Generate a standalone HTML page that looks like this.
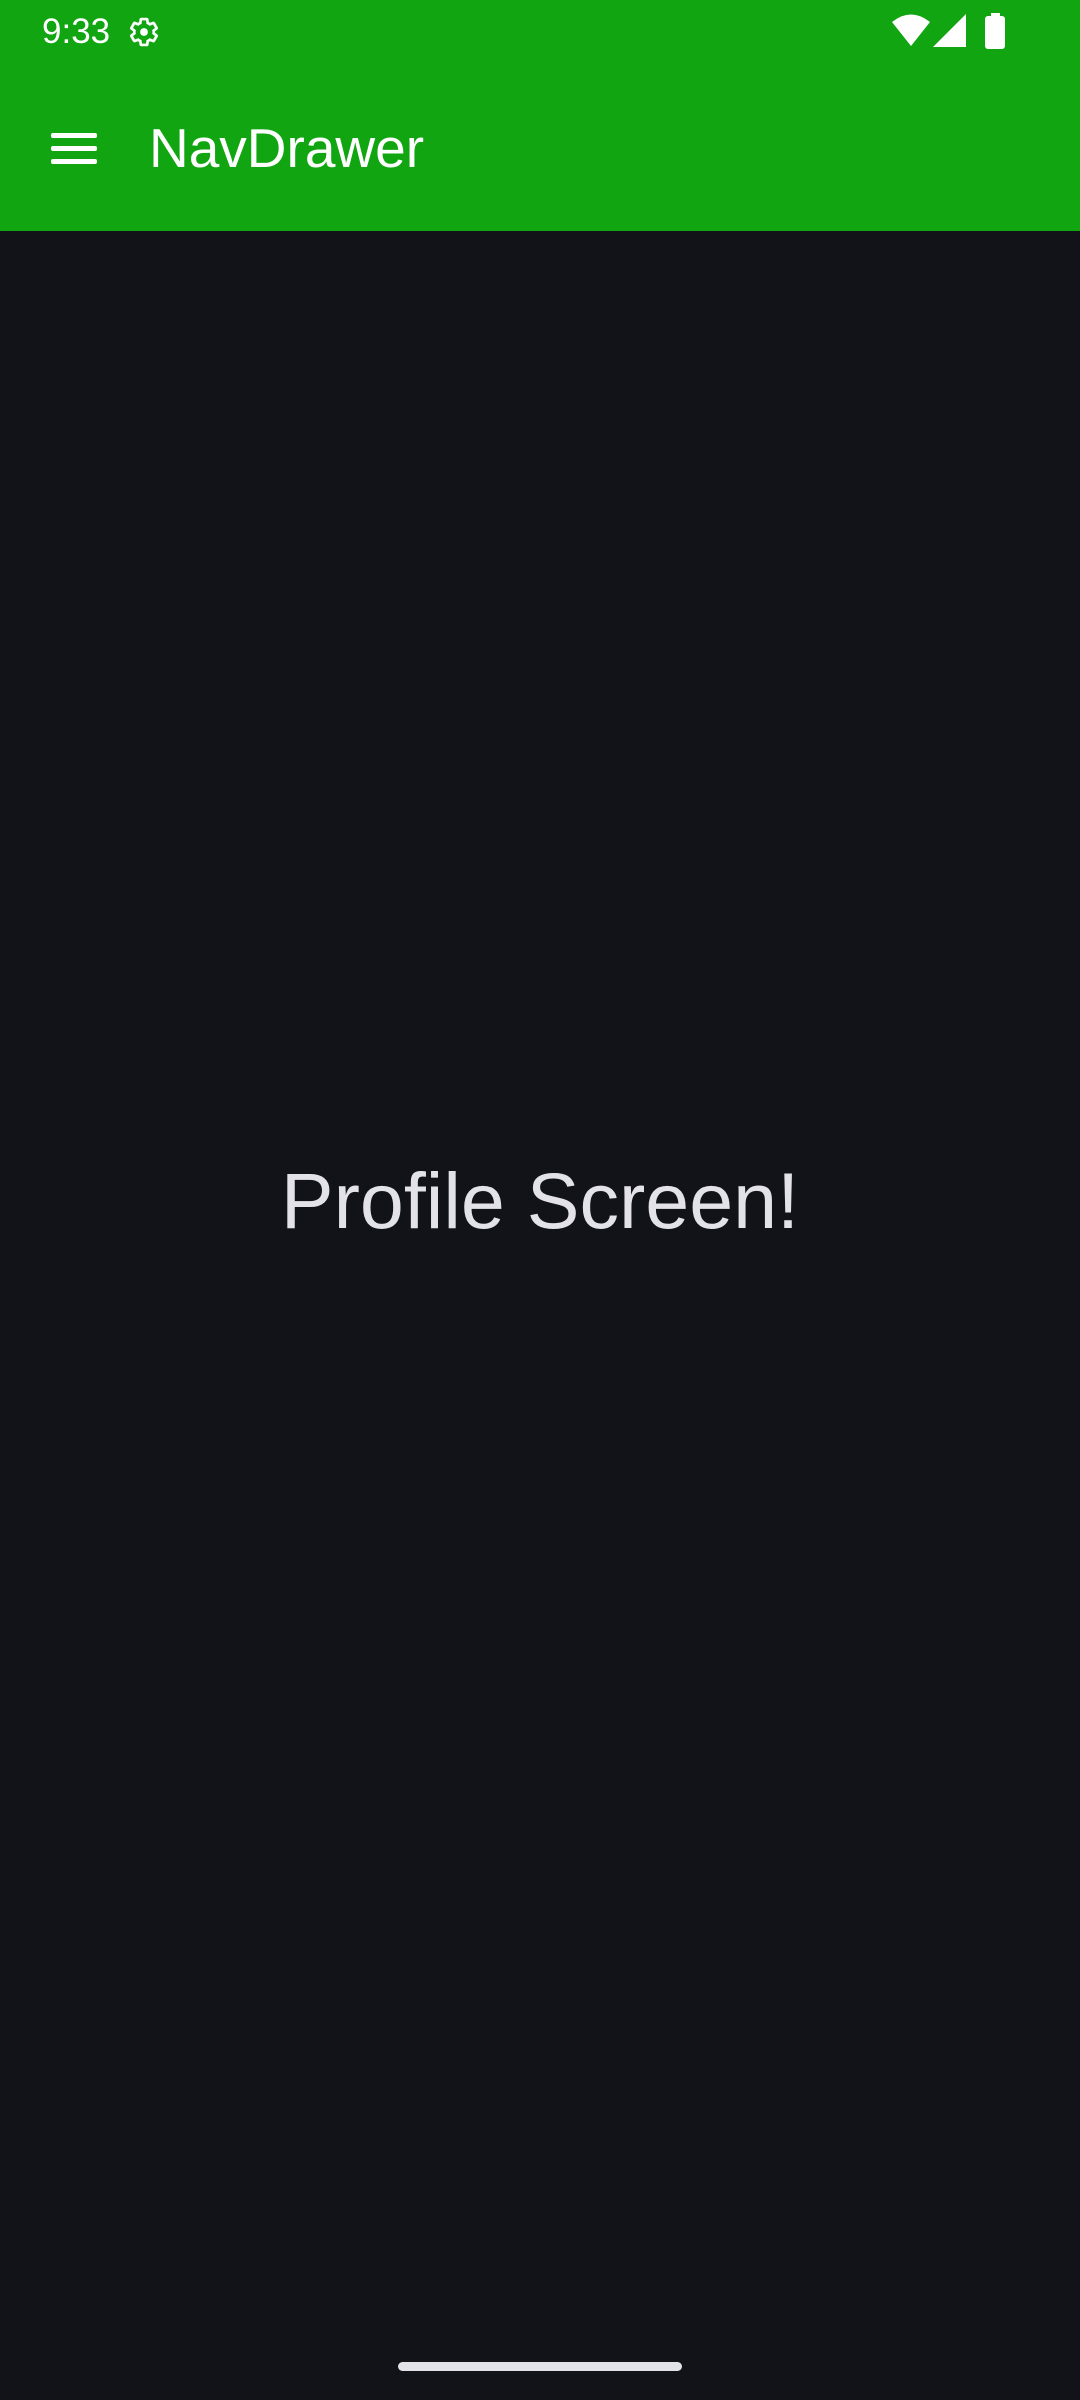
<!DOCTYPE html>
<html><head><meta charset="utf-8"><style>
html,body{margin:0;padding:0;width:1080px;height:2400px;overflow:hidden;background:#121318;font-family:"Liberation Sans",sans-serif}
.top{position:absolute;left:0;top:0;width:1080px;height:231px;background:#11a611}
.time{position:absolute;left:42px;top:12px;font-size:35px;color:#fff}
.title{position:absolute;left:149px;top:116px;font-size:55px;color:#fff}
.ham{position:absolute;left:51px;width:46px;height:5px;background:#fff;border-radius:2px}
.msg{position:absolute;left:0;width:1080px;top:1155px;text-align:center;font-size:79px;color:#e3e2e8}
.handle{position:absolute;left:398px;top:2362px;width:284px;height:9px;border-radius:5px;background:#e3e2e8}
</style></head><body>
<div class="top">
<div class="time">9:33</div>
<svg style="position:absolute;left:126px;top:14px" width="36" height="36" viewBox="0 0 24 24"><path fill="none" stroke="#fff" stroke-width="2" d="M19.14 12.94c.04-.3.06-.61.06-.94 0-.32-.02-.64-.07-.94l2.03-1.58a.49.49 0 0 0 .12-.61l-1.92-3.32a.488.488 0 0 0-.59-.22l-2.39.96c-.5-.38-1.03-.7-1.620-.94l-.36-2.54a.484.484 0 0 0-.48-.41h-3.84c-.24 0-.43.17-.47.41l-.36 2.54c-.59.24-1.13.57-1.62.94l-2.39-.96c-.22-.08-.47 0-.59.22L2.74 8.87c-.12.21-.08.47.12.61l2.03 1.58c-.05.3-.09.63-.09.94s.02.64.07.94l-2.030 1.58a.49.49 0 0 0-.12.61l1.92 3.32c.12.22.37.29.59.22l2.39-.96c.5.38 1.03.7 1.62.94l.36 2.54c.05.24.24.41.48.41h3.84c.24 0 .44-.17.47-.41l.36-2.54c.59-.24 1.13-.56 1.62-.94l2.39.96c.22.08.47 0 .59-.22l1.92-3.32c.12-.22.07-.47-.12-.61l-2.01-1.58z" transform="translate(1.2 1.2) scale(0.9)"/><circle cx="12" cy="12" r="2.6" fill="#fff"/></svg>
<svg style="position:absolute;left:890px;top:13px" width="42" height="34" viewBox="0 0 42 34"><path fill="#fff" d="M21 33 L2 9 Q21 -6 40 9 Z"/></svg>
<svg style="position:absolute;left:933px;top:14px" width="34" height="34" viewBox="0 0 34 34"><path fill="#fff" d="M0 33 L33 0 L33 33 Z"/></svg>
<svg style="position:absolute;left:985px;top:13px" width="21" height="36" viewBox="0 0 21 36"><rect x="6" y="0" width="9" height="4" fill="#fff"/><rect x="0" y="3" width="20" height="33" rx="3" fill="#fff"/></svg>
<div class="ham" style="top:133px"></div>
<div class="ham" style="top:146px"></div>
<div class="ham" style="top:159px"></div>
<div class="title">NavDrawer</div>
</div>
<div class="msg">Profile Screen!</div>
<div class="handle"></div>
</body></html>
